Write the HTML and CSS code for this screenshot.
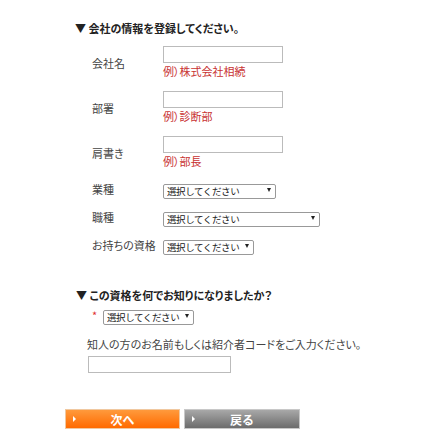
FILE: index.html
```html
<!DOCTYPE html>
<html lang="ja">
<head>
    <meta charset="UTF-8">
    <meta name="viewport" content="width=device-width, initial-scale=1.0">
    <title>会社情報の登録</title>
    <link rel="stylesheet" href="styles.css">
</head>
<body>
    <div class="page">
        <h2 class="section-title">▼ 会社の情報を登録してください。</h2>

        <div class="form-grid">
            <div class="label">会社名</div>
            <div class="field">
                <input class="text" type="text">
                <p class="example">例）株式会社相続</p>
            </div>

            <div class="label">部署</div>
            <div class="field">
                <input class="text" type="text">
                <p class="example">例）診断部</p>
            </div>

            <div class="label">肩書き</div>
            <div class="field">
                <input class="text" type="text">
                <p class="example">例）部長</p>
            </div>

            <div class="label">業種</div>
            <div class="field">
                <span class="select select-md"><select><option>選択してください</option></select></span>
            </div>

            <div class="label">職種</div>
            <div class="field">
                <span class="select select-lg"><select><option>選択してください</option></select></span>
            </div>

            <div class="label">お持ちの資格</div>
            <div class="field">
                <span class="select select-sm"><select><option>選択してください</option></select></span>
            </div>
        </div>

        <h2 class="section-title second">▼ この資格を何でお知りになりましたか？</h2>

        <div class="source">
            <div class="source-row">
                <span class="required">*</span>
                <span class="select select-sm"><select><option>選択してください</option></select></span>
            </div>
            <p class="note">知人の方のお名前もしくは紹介者コードをご入力ください。</p>
            <input class="text text-wide" type="text">
        </div>

        <div class="buttons">
            <button class="btn btn-next">次へ</button>
            <button class="btn btn-back">戻る</button>
        </div>
    </div>
</body>
</html>
```

FILE: styles.css
```css
* {
    margin: 0;
    padding: 0;
    box-sizing: border-box;
}

body {
    font-family: "Noto Sans CJK JP", "Noto Sans", sans-serif;
    font-size: 11px;
    line-height: 16px;
    color: #333;
    background-color: #fff;
    font-feature-settings: "palt";
}

.page {
    padding: 20px 0 0 65px;
}

/* Títulos de sección */
.section-title {
    font-size: 11px;
    font-weight: bold;
    color: #222;
    margin-left: 10px;
    line-height: 16px;
}

.section-title.second {
    margin-top: 34px;
    margin-left: 11px;
}

/* Formulario principal */
.form-grid {
    display: grid;
    grid-template-columns: 71px auto;
    row-gap: 12px;
    align-items: center;
    margin: 10px 0 0 27px;
}

.label {
    color: #444;
}

.field {
    display: flex;
    flex-direction: column;
    align-items: flex-start;
}

.text {
    width: 120px;
    height: 17px;
    border: 1px solid #bbb;
    background: #fff;
    font: inherit;
}

.text-wide {
    width: 143px;
}

.example {
    color: #c83232;
    line-height: 16px;
}

/* Desplegables */
.select {
    position: relative;
    display: inline-block;
    height: 15px;
}

.select select {
    appearance: none;
    -webkit-appearance: none;
    width: 100%;
    height: 15px;
    border: 1px solid #999;
    border-radius: 2px;
    background: #fff;
    font-family: inherit;
    font-size: 9.5px;
    letter-spacing: -0.4px;
    line-height: 13px;
    color: #222;
    padding: 0 0 0 3px;
}

.select::after {
    content: "";
    position: absolute;
    right: 5px;
    top: 6px;
    border-left: 2.5px solid transparent;
    border-right: 2.5px solid transparent;
    border-top: 4px solid #222;
    pointer-events: none;
}

.select-sm {
    width: 91px;
}

.select-md {
    width: 113px;
}

.select-lg {
    width: 157px;
}

/* Segunda sección */
.source {
    margin-left: 22px;
}

.source-row {
    display: flex;
    align-items: center;
    gap: 2px;
    margin-top: 4px;
    padding-left: 5px;
}

.required {
    color: #e03030;
    width: 9px;
    font-size: 11px;
}

.note {
    margin-top: 13px;
    color: #444;
}

.source .text {
    margin: 4px 0 0 1px;
}

/* Botones */
.buttons {
    display: flex;
    gap: 4px;
    margin-top: 36px;
}

.btn {
    position: relative;
    width: 116px;
    height: 20px;
    border: 1px solid #ccc;
    color: #fff;
    font-family: inherit;
    font-size: 12px;
    font-weight: bold;
    cursor: pointer;
}

.btn::before {
    content: "";
    position: absolute;
    left: 7px;
    top: 6px;
    border-top: 3px solid transparent;
    border-bottom: 3px solid transparent;
    border-left: 3px solid #fff;
}

.btn-next {
    width: 115px;
    background: linear-gradient(#ff9a3c, #ff6a00);
    border-color: #f0c8a0;
}

.btn-back {
    background: linear-gradient(#a8a8a8, #6c6c6c);
    border-color: #c8c8c8;
}
```
